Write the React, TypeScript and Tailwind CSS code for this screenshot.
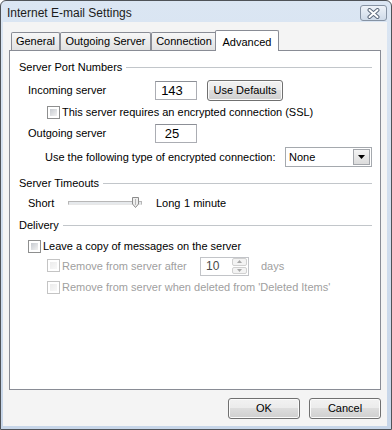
import React from "react";

const font = { fontFamily: '"Liberation Sans", Arial, sans-serif' };

function Check({ disabled = false }: { disabled?: boolean }) {
  return (
    <span
      className={
        disabled
          ? "box-border block w-[13px] h-[13px] shrink-0 border border-[#c4c4c4] bg-white p-[2px]"
          : "box-border block w-[13px] h-[13px] shrink-0 border border-[#8e8f8f] bg-white p-[2px]"
      }
    >
      <span
        className={
          disabled
            ? "block w-full h-full bg-gradient-to-br from-[#ececec] to-[#f8f8f8]"
            : "block w-full h-full bg-gradient-to-br from-[#c6cad0] to-[#f2f2f2]"
        }
      />
    </span>
  );
}

function WinButton({ label, className }: { label: string; className: string }) {
  return (
    <button
      className={`box-border rounded-[3px] border border-[#707070] bg-[linear-gradient(#f2f2f2_0%,#ebebeb_50%,#dddddd_50%,#cfcfcf_100%)] shadow-[inset_0_0_0_1px_#fbfbfb] text-[11px] text-black ${className}`}
    >
      {label}
    </button>
  );
}

function GroupHeader({ title, className }: { title: string; className: string }) {
  return (
    <div className={`flex items-center ${className}`}>
      <span className="text-[11px] leading-[13px]">{title}</span>
      <div className="ml-[4px] h-px flex-1 bg-[#c2c6ca]" />
    </div>
  );
}

function PortInput({ value }: { value: string }) {
  return (
    <div className="box-border flex h-[19px] w-[42px] items-center justify-center border border-[#abadb3] border-t-[#8c8f96] bg-white pr-[8px] text-[13px] leading-none">
      {value}
    </div>
  );
}

export default function App() {
  return (
    <div
      style={font}
      className="box-border flex h-[430px] w-[392px] flex-col rounded-t-[6px] border border-[#4f5358] bg-gradient-to-b from-[#dbe6f3] to-[#c7d6e9] pb-[3px] pl-[2px] pr-[4px] text-black"
    >
      {/* Title bar */}
      <div className="flex h-[21px] shrink-0 items-start pl-[4px]">
        <span className="mt-[5px] text-[12px] leading-[14px] text-[#1b1b1b]">Internet E-mail Settings</span>
        <div className="ml-auto mt-[4px] flex h-[16px] w-[27px] items-center justify-center rounded-[3px] border border-[#8693a4] bg-gradient-to-b from-[#eef3f9] to-[#cfdbe9]">
          <svg width="13" height="11" viewBox="0 0 13 11">
            <path d="M2.5 2 L10.5 9 M10.5 2 L2.5 9" stroke="#5d6b7d" strokeWidth="4" strokeLinecap="round" />
            <path d="M2.5 2 L10.5 9 M10.5 2 L2.5 9" stroke="#ffffff" strokeWidth="2" strokeLinecap="round" />
          </svg>
        </div>
      </div>

      {/* Client area */}
      <div className="flex flex-1 flex-col bg-[#f4f4f4] px-[6px]">
        {/* Tabs */}
        <div className="mt-[8px] flex h-[20px] items-end pl-[2px]">
          <div className="box-border flex h-[18px] w-[49px] items-center justify-center rounded-t-[2px] border border-b-0 border-[#898c95] bg-gradient-to-b from-[#f7f7f7] to-[#e1e1e1] text-[11px]">
            General
          </div>
          <div className="box-border flex h-[18px] w-[91px] items-center justify-center rounded-t-[2px] border border-b-0 border-[#898c95] bg-gradient-to-b from-[#f7f7f7] to-[#e1e1e1] text-[11px]">
            Outgoing Server
          </div>
          <div className="box-border flex h-[18px] w-[66px] items-center justify-center rounded-t-[2px] border border-b-0 border-[#898c95] bg-gradient-to-b from-[#f7f7f7] to-[#e1e1e1] text-[11px]">
            Connection
          </div>
          <div className="relative z-10 -mb-px -ml-[2px] box-border flex h-[21px] w-[64px] items-start justify-center rounded-t-[2px] border border-b-0 border-[#898c95] bg-white pt-[3px] text-[11px]">
            Advanced
          </div>
        </div>

        {/* Panel */}
        <div className="box-border flex h-[340px] flex-col border border-[#898c95] bg-white pl-[9px] pr-[8px] text-[11px]">
          <GroupHeader title="Server Port Numbers" className="mt-[10px] h-[13px]" />

          <div className="mt-[6px] flex h-[20px] items-center">
            <span className="ml-[9px] w-[127px]">Incoming server</span>
            <PortInput value="143" />
            <WinButton label="Use Defaults" className="ml-[10px] h-[21px] w-[76px]" />
          </div>

          <div className="mt-[4px] flex h-[16px] items-center">
            <span className="ml-[28px]">
              <Check />
            </span>
            <span className="ml-[2px]">This server requires an encrypted connection (SSL)</span>
          </div>

          <div className="mt-[4px] flex h-[19px] items-center">
            <span className="ml-[9px] w-[127px]">Outgoing server</span>
            <PortInput value="25" />
          </div>

          <div className="mt-[4px] flex h-[20px] items-center">
            <span className="ml-[26px] w-[241px]">Use the following type of encrypted connection:</span>
            <div className="box-border flex h-[20px] w-[87px] shrink-0 items-center border border-[#a5a9ae] bg-white pl-[3px] pr-[1px]">
              <span className="flex-1">None</span>
              <div className="box-border flex h-[16px] w-[17px] items-center justify-center border border-[#a3a6ab] bg-gradient-to-b from-[#f4f4f4] to-[#dcdcdc]">
                <svg width="7" height="4" viewBox="0 0 7 4">
                  <path d="M0 0 H7 L3.5 4 Z" fill="#000" />
                </svg>
              </div>
            </div>
          </div>

          <GroupHeader title="Server Timeouts" className="mt-[10px] h-[13px]" />

          <div className="mt-[4px] flex h-[18px] items-center">
            <span className="ml-[9px] w-[40px]">Short</span>
            <div className="relative flex h-[18px] w-[74px] items-center">
              <div className="box-border h-[4px] w-full border border-[#b7b7b7] border-b-[#e8e8e8] bg-[#e6e9ec]" />
              <svg className="absolute left-[64px] top-[3px]" width="7" height="11" viewBox="0 0 7 11">
                <path d="M0.5 0.5 H6.5 V7 L3.5 10.5 L0.5 7 Z" fill="#eeeeee" stroke="#8c8c8c" />
                <path d="M3.5 2 V8" stroke="#b5b5b5" />
              </svg>
            </div>
            <span className="ml-[14px] w-[28px]">Long</span>
            <span>1 minute</span>
          </div>

          <GroupHeader title="Delivery" className="mt-[6px] h-[14px]" />

          <div className="mt-[7px] flex h-[14px] items-center">
            <span className="ml-[9px]">
              <Check />
            </span>
            <span className="ml-[2px]">Leave a copy of messages on the server</span>
          </div>

          <div className="mt-[3px] flex h-[20px] items-center text-[#a0a0a0]">
            <span className="ml-[28px] mb-[2px]">
              <Check disabled />
            </span>
            <span className="ml-[2px] w-[138px]">Remove from server after</span>
            <div className="box-border flex h-[19px] w-[49px] shrink-0 items-center border border-[#c2c4c8] bg-white pl-[5px] pr-[1px]">
              <span className="flex-1 text-[12px] text-[#4a4a4a]">10</span>
              <div className="flex h-[16px] w-[15px] flex-col gap-px">
                <div className="box-border flex flex-1 items-center justify-center rounded-[2px] border border-[#d0d0d0] bg-[#f3f3f3]">
                  <svg width="5" height="3" viewBox="0 0 5 3">
                    <path d="M0 3 H5 L2.5 0 Z" fill="#a8a8a8" />
                  </svg>
                </div>
                <div className="box-border flex flex-1 items-center justify-center rounded-[2px] border border-[#d0d0d0] bg-[#f3f3f3]">
                  <svg width="5" height="3" viewBox="0 0 5 3">
                    <path d="M0 0 H5 L2.5 3 Z" fill="#a8a8a8" />
                  </svg>
                </div>
              </div>
            </div>
            <span className="ml-[12px]">days</span>
          </div>

          <div className="mt-[4px] flex h-[14px] items-center text-[#a0a0a0]">
            <span className="ml-[28px]">
              <Check disabled />
            </span>
            <span className="ml-[2px]">Remove from server when deleted from 'Deleted Items'</span>
          </div>
        </div>

        {/* Dialog buttons */}
        <div className="mt-[8px] flex justify-end gap-[9px]">
          <WinButton label="OK" className="h-[21px] w-[72px]" />
          <WinButton label="Cancel" className="h-[21px] w-[72px]" />
        </div>
      </div>
    </div>
  );
}
